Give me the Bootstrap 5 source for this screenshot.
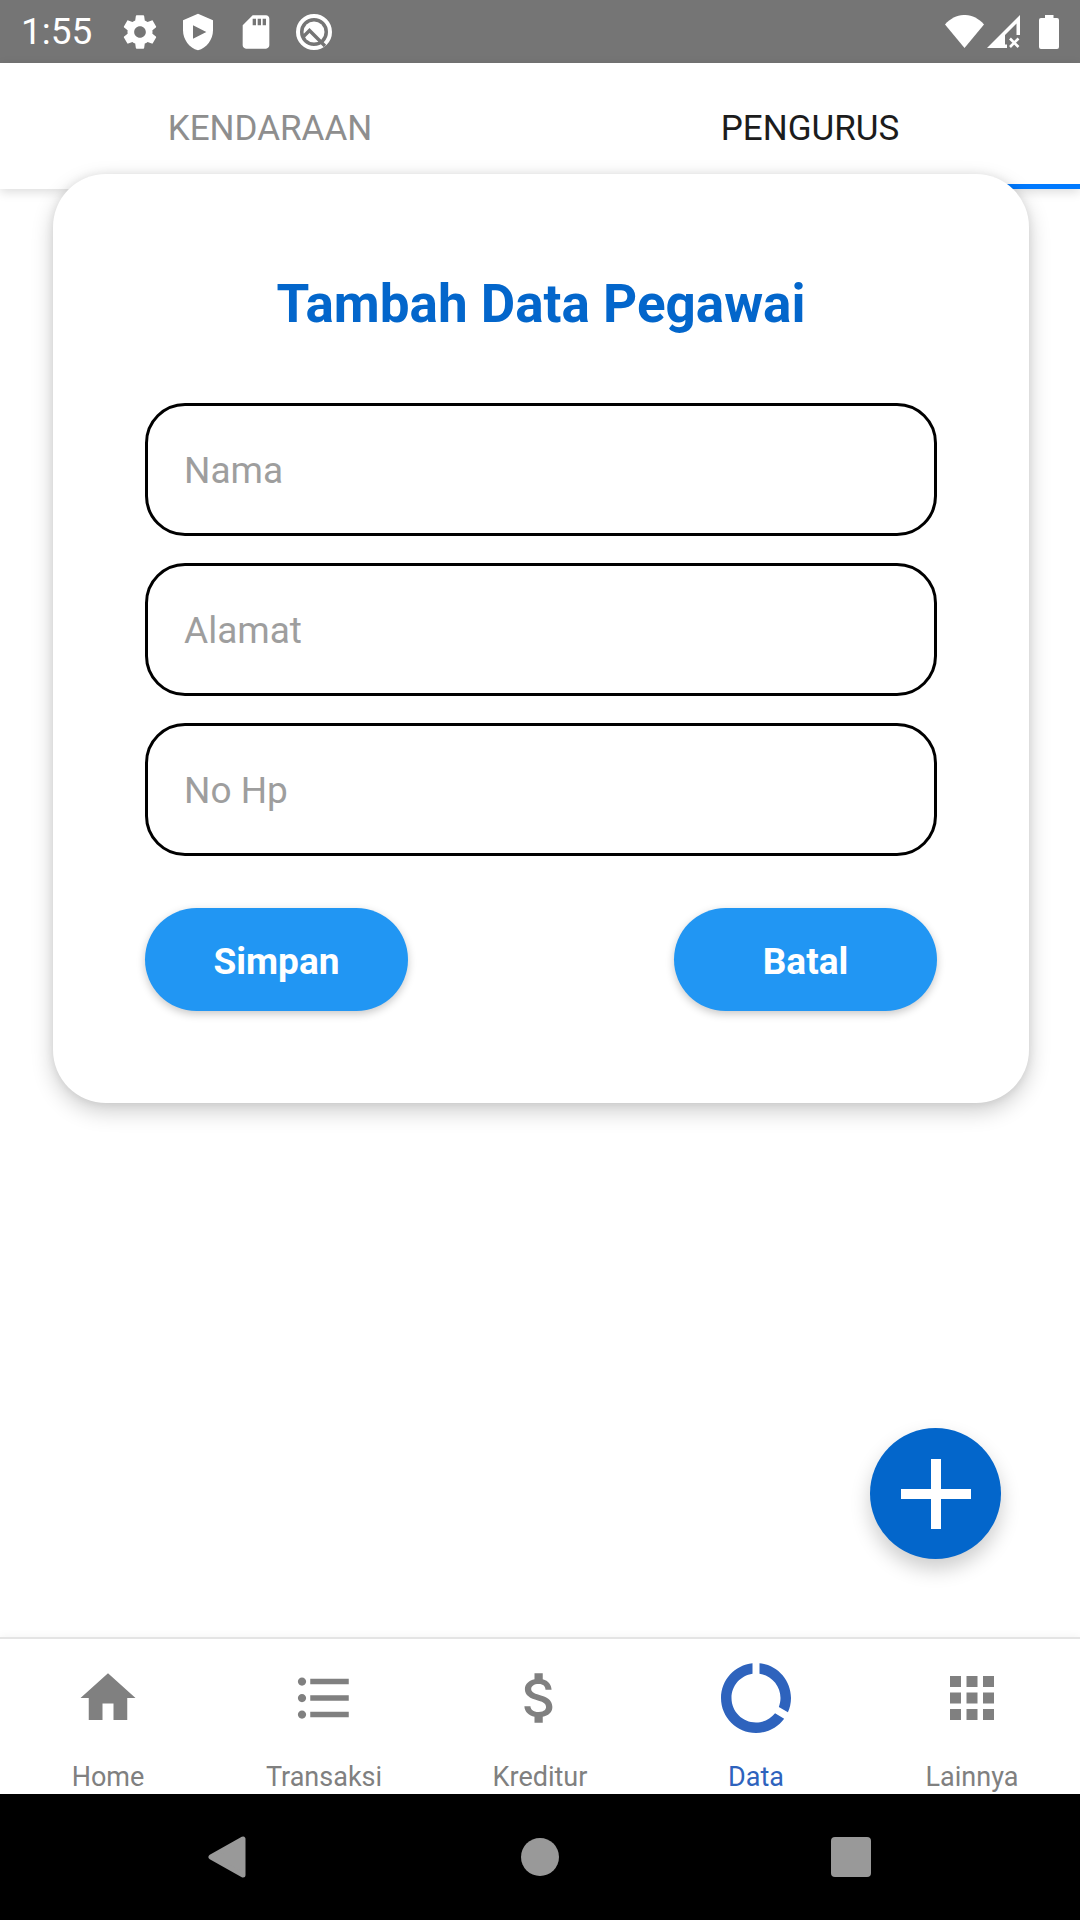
<!DOCTYPE html>
<html lang="id">
<head>
<meta charset="utf-8">
<meta name="viewport" content="width=device-width, initial-scale=1">
<title>Tambah Data Pegawai</title>
<link href="https://cdn.jsdelivr.net/npm/bootstrap@5.3.0/dist/css/bootstrap.min.css" rel="stylesheet">
<style>
  body { font-family: Roboto, "Noto Sans", sans-serif; background: #fff; }
  svg { display: block; flex: none; }
  a { text-decoration: none; }
  .statusbar { height: 63px; background: #757575; color: #fff; padding: 0 21px; font-size: 37px; line-height: 65px; }
  .status-icons { gap: 18px; margin-left: 28px; }
  .signal-icons { gap: 3px; }
  .tabs-top { height: 126px; background: #fff; box-shadow: 0 3px 10px rgba(0,0,0,.14); }
  .tab-link { font-size: 35px; line-height: 42px; color: #8e8e8e; border-bottom: 5px solid transparent; padding-top: 10px; }
  .tab-link.active { color: #1c1c1c; border-color: #007aff; }
  .form-panel { margin: -15px 51px 0 53px; padding: 92px; border-radius: 53px; background: #fff; z-index: 2;
    box-shadow: 0 8px 22px rgba(0,0,0,.2), 0 0 10px rgba(0,0,0,.08); }
  .panel-title { font-size: 53px; line-height: 76px; color: #0366cb; margin-bottom: 61px; }
  .fields { gap: 27px; margin-bottom: 52px; }
  .fields .form-control { height: 133px; border: 3px solid #000; border-radius: 40px; padding: 2px 36px 0; font-size: 37px; color: #222; }
  .fields .form-control::placeholder { color: #9e9e9e; opacity: 1; }
  .btn-action { width: 263px; height: 103px; border-radius: 52px; background: #2196f3; color: #fff; border: 0;
    padding: 10px 12px 6px; font-size: 37px; font-weight: 700; box-shadow: 0 3px 8px rgba(0,0,0,.22); }
  .btn-action:hover { background: #1b87de; color: #fff; }
  .fab { right: 79px; bottom: 78px; width: 131px; height: 131px; background: #0366cb; border: 0;
    box-shadow: 0 10px 20px rgba(0,0,0,.2); }
  .bottom-tabs { height: 157px; border-top: 2px solid #e4e4e4; background: #fff; box-shadow: 0 -2px 8px rgba(0,0,0,.04); }
  .bottom-tabs a { color: #808080; font-size: 27px; line-height: 32px; padding-top: 17px; }
  .bottom-tabs a.active { color: #2e63bd; }
  .tab-icon { height: 84px; margin-bottom: 21px; }
  .sysbar { height: 126px; background: #000; }
  .sysbar button { width: 311px; background: none; border: 0; }
</style>
<script src="https://cdn.jsdelivr.net/npm/bootstrap@5.3.0/dist/js/bootstrap.bundle.min.js"></script>
</head>
<body>
<div class="d-flex flex-column min-vh-100">
  <div class="statusbar d-flex align-items-center justify-content-between">
    <div class="d-flex align-items-center">
      <span>1:55</span>
      <div class="status-icons d-flex align-items-center">
        <svg width="40" height="40" viewBox="0 0 24 24" fill="#fff"><path d="M19.43 12.98c.04-.32.07-.64.07-.98s-.03-.66-.07-.98l2.11-1.65c.19-.15.24-.42.12-.64l-2-3.46c-.12-.22-.39-.3-.61-.22l-2.49 1c-.52-.4-1.08-.73-1.69-.98l-.38-2.65C14.46 2.18 14.25 2 14 2h-4c-.25 0-.46.18-.49.42l-.38 2.65c-.61.25-1.17.59-1.69.98l-2.49-1c-.23-.09-.49 0-.61.22l-2 3.46c-.13.22-.07.49.12.64l2.11 1.65c-.04.32-.07.65-.07.98s.03.66.07.98l-2.11 1.65c-.19.15-.24.42-.12.64l2 3.46c.12.22.39.3.61.22l2.49-1c.52.4 1.08.73 1.69.98l.38 2.65c.03.24.24.42.49.42h4c.25 0 .46-.18.49-.42l.38-2.65c.61-.25 1.17-.59 1.69-.98l2.49 1c.23.09.49 0 .61-.22l2-3.46c.12-.22.07-.49-.12-.64l-2.11-1.65zM12 15.5c-1.93 0-3.5-1.57-3.5-3.5s1.57-3.5 3.5-3.5 3.5 1.57 3.5 3.5-1.57 3.5-3.5 3.5z"/></svg>
        <svg width="40" height="40" viewBox="0 0 24 24" fill="#fff" fill-rule="evenodd"><path d="M12 1L3 5v6c0 5.550 3.840 10.740 9 12 5.160-1.260 9-6.450 9-12V5zM9 8l8 4-8 4z"/></svg>
        <svg width="40" height="40" viewBox="0 0 24 24" fill="#fff"><path d="M18 2h-8L4.020 8 4 20c0 1.100.9 2 2 2h12c1.100 0 2-.9 2-2V4c0-1.100-.9-2-2-2zm-6 6h-2V4h2v4zm3 0h-2V4h2v4zm3 0h-2V4h2v4z"/></svg>
        <svg width="40" height="40" viewBox="-2 -2 40 40"><circle cx="18" cy="18" r="16" fill="none" stroke="#fff" stroke-width="4"/><circle cx="18" cy="18" r="10.500" fill="#fff"/><path d="M7 23L13.500 16.500 29 32" fill="none" stroke="#757575" stroke-width="3.400"/></svg>
      </div>
    </div>
    <div class="signal-icons d-flex align-items-center">
      <svg width="39" height="33" viewBox="0 0 39 33" fill="#fff"><path d="M19.500 33L0 9.500C11-3.200 28-3.200 39 9.500z"/></svg>
      <svg width="33" height="33" viewBox="0 0 33 33"><path fill="#fff" d="M0 33L33 0V20H29.500V8.500L18 20V29.500h2V33z"/><path stroke="#fff" stroke-width="2.600" d="M23 23.500l8.500 8.500M31.500 23.500L23 32"/></svg>
      <svg class="ms-3" width="20" height="34" viewBox="0 0 20 34" fill="#fff"><path d="M6 0h8.500v3H18a2 2 0 0 1 2 2v27a2 2 0 0 1-2 2H2a2 2 0 0 1-2-2V5a2 2 0 0 1 2-2h4z"/></svg>
    </div>
  </div>

  <nav class="tabs-top d-flex">
    <a href="#" class="tab-link flex-fill w-50 d-flex align-items-center justify-content-center">KENDARAAN</a>
    <a href="#" class="tab-link active flex-fill w-50 d-flex align-items-center justify-content-center" aria-current="page">PENGURUS</a>
  </nav>

  <main class="flex-grow-1 position-relative">
    <form class="form-panel position-relative">
      <h1 class="panel-title fw-bold text-center">Tambah Data Pegawai</h1>
      <div class="fields d-flex flex-column">
        <input class="form-control" type="text" placeholder="Nama" aria-label="Nama">
        <input class="form-control" type="text" placeholder="Alamat" aria-label="Alamat">
        <input class="form-control" type="tel" placeholder="No Hp" aria-label="No Hp">
      </div>
      <div class="d-flex justify-content-between">
        <button type="button" class="btn btn-action">Simpan</button>
        <button type="button" class="btn btn-action">Batal</button>
      </div>
    </form>
    <button type="button" class="fab btn rounded-circle position-absolute d-flex align-items-center justify-content-center p-0" aria-label="Tambah">
      <svg width="70" height="70" viewBox="0 0 70 70"><path d="M35 0v70M0 35h70" stroke="#fff" stroke-width="10"/></svg>
    </button>
  </main>

  <nav class="bottom-tabs d-flex">
    <a href="#" class="col text-center"><span class="tab-icon d-flex align-items-center justify-content-center"><svg width="66" height="66" viewBox="0 0 24 24" fill="currentColor"><path d="M10 20v-6h4v6h5v-8h3L12 3 2 12h3v8z"/></svg></span>Home</a>
    <a href="#" class="col text-center"><span class="tab-icon d-flex align-items-center justify-content-center"><svg width="66" height="66" viewBox="0 0 24 24" fill="currentColor"><path d="M4 10.500c-.83 0-1.500.67-1.500 1.500s.67 1.500 1.500 1.500 1.500-.67 1.500-1.500-.67-1.500-1.500-1.500zm0-6c-.83 0-1.500.67-1.500 1.500S3.170 7.500 4 7.500 5.500 6.830 5.500 6 4.830 4.500 4 4.500zm0 12c-.83 0-1.500.68-1.500 1.500s.68 1.500 1.500 1.500 1.500-.68 1.500-1.500-.67-1.500-1.500-1.500zM7 19h14v-2H7v2zm0-6h14v-2H7v2zm0-8v2h14V5H7z"/></svg></span>Transaksi</a>
    <a href="#" class="col text-center"><span class="tab-icon d-flex align-items-center justify-content-center"><svg width="66" height="66" viewBox="0 0 24 24" fill="currentColor"><path d="M11.800 10.900c-2.270-.59-3-1.200-3-2.150 0-1.090 1.010-1.850 2.700-1.850 1.780 0 2.440.85 2.500 2.100h2.210c-.07-1.720-1.120-3.300-3.210-3.810V3h-3v2.160c-1.940.42-3.500 1.680-3.500 3.610 0 2.310 1.910 3.460 4.700 4.130 2.500.6 3 1.480 3 2.410 0 .69-.49 1.790-2.700 1.790-2.060 0-2.870-.92-2.980-2.100h-2.200c.12 2.190 1.760 3.420 3.680 3.830V21h3v-2.150c1.950-.37 3.500-1.500 3.500-3.550 0-2.840-2.430-3.810-4.700-4.400z"/></svg></span>Kreditur</a>
    <a href="#" class="col text-center active" aria-current="page"><span class="tab-icon d-flex align-items-center justify-content-center"><svg width="84" height="84" viewBox="0 0 24 24" fill="currentColor"><path d="M13 2.050v3.030c3.390.49 6 3.390 6 6.920 0 .9-.18 1.750-.48 2.540l2.600 1.530c.56-1.240.88-2.620.88-4.070 0-5.180-3.950-9.450-9-9.950zM12 19c-3.870 0-7-3.130-7-7 0-3.530 2.610-6.430 6-6.920V2.050c-5.060.5-9 4.760-9 9.950 0 5.520 4.470 10 9.990 10 3.310 0 6.240-1.610 8.060-4.090l-2.600-1.530C16.170 17.980 14.210 19 12 19z"/></svg></span>Data</a>
    <a href="#" class="col text-center"><span class="tab-icon d-flex align-items-center justify-content-center"><svg width="66" height="66" viewBox="0 0 24 24" fill="currentColor"><path d="M4 8h4V4H4v4zm6 12h4v-4h-4v4zm-6 0h4v-4H4v4zm0-6h4v-4H4v4zm6 0h4v-4h-4v4zm6-10v4h4V4h-4zm-6 4h4V4h-4v4zm6 6h4v-4h-4v4zm0 6h4v-4h-4v4z"/></svg></span>Lainnya</a>
  </nav>

  <div class="sysbar d-flex justify-content-center">
    <button type="button" class="d-flex align-items-center justify-content-center" aria-label="Kembali"><svg width="42" height="42" viewBox="0 0 42 42"><path d="M35 3v36L3 21z" fill="#999" stroke="#999" stroke-width="5" stroke-linejoin="round"/></svg></button>
    <button type="button" class="d-flex align-items-center justify-content-center" aria-label="Beranda"><svg width="38" height="38" viewBox="0 0 38 38"><circle cx="19" cy="19" r="19" fill="#999"/></svg></button>
    <button type="button" class="d-flex align-items-center justify-content-center" aria-label="Terkini"><svg width="40" height="40" viewBox="0 0 40 40"><rect width="40" height="40" rx="4" fill="#999"/></svg></button>
  </div>
</div>
</body>
</html>
